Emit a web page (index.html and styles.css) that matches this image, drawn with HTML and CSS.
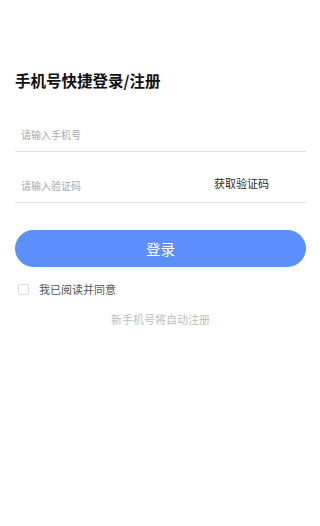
FILE: index.html
```html
<!DOCTYPE html>
<html lang="zh-CN">
<head>
<meta charset="utf-8">
<meta name="viewport" content="width=device-width, initial-scale=1">
<title>登录</title>
<link rel="stylesheet" href="styles.css">
</head>
<body>
<main class="page">
  <h1 class="title">手机号快捷登录/注册</h1>
  <div class="field">
    <input class="input" type="tel" placeholder="请输入手机号">
  </div>
  <div class="field field-code">
    <input class="input" type="text" placeholder="请输入验证码">
    <span class="get-code">获取验证码</span>
  </div>
  <button class="login-btn" type="button">登录</button>
  <label class="agree">
    <span class="checkbox"></span>
    <span class="agree-text">我已阅读并同意</span>
  </label>
  <p class="note">新手机号将自动注册</p>
</main>
</body>
</html>
```

FILE: styles.css
```css
html, body {
  margin: 0;
  padding: 0;
  background: #ffffff;
}

body {
  font-family: "Noto Sans CJK SC", "Noto Sans", sans-serif;
  color: #1a1a1a;
}

.page {
  display: flex;
  flex-direction: column;
  padding: 69px 14px 0 15px;
}

.title {
  margin: 0;
  font-size: 15.5px;
  line-height: 22px;
  font-weight: 700;
  color: #111111;
}

.field {
  display: flex;
  align-items: center;
  height: 32px;
  border-bottom: 1px solid #dfe4ea;
  margin-top: 28px;
}

.field-code {
  margin-top: 18px;
}

.input {
  flex: 1;
  min-width: 0;
  border: none;
  outline: none;
  background: transparent;
  padding: 0 0 0 6px;
  font-family: inherit;
  font-size: 10px;
  line-height: 16px;
  color: #333333;
}

.input::placeholder {
  color: #a9a9a9;
}

.get-code {
  font-size: 11px;
  line-height: 16px;
  color: #2b2b2b;
  margin-right: 37px;
  margin-bottom: 6px;
}

.login-btn {
  margin-top: 27px;
  height: 37px;
  border: none;
  border-radius: 19px;
  background: #5c8ffb;
  color: #ffffff;
  font-family: inherit;
  font-size: 14.5px;
  padding: 0;
}

.agree {
  display: flex;
  align-items: center;
  gap: 10px;
  margin-top: 14px;
  height: 16px;
  padding-left: 3px;
}

.checkbox {
  width: 9px;
  height: 9px;
  border: 1px solid #dcdcdc;
  border-radius: 1px;
}

.agree-text {
  font-size: 11px;
  line-height: 16px;
  color: #555555;
}

.note {
  margin: 14px 0 0;
  font-size: 11px;
  line-height: 16px;
  color: #bdbdbd;
  text-align: center;
}
```
